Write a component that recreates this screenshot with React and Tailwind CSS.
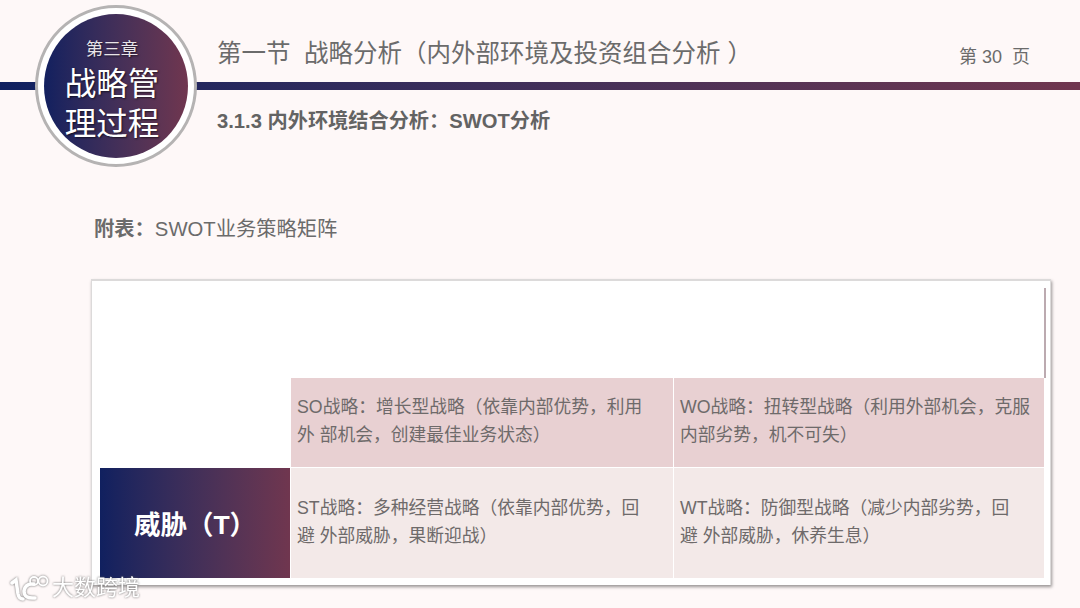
const font = "font-['Liberation_Sans','Noto_Sans_CJK_SC',sans-serif]"

function Badge() {
  return (
    <div className="absolute left-[35px] top-[5px] w-[162px] h-[162px] rounded-full bg-white border-[3px] border-[#b5b3b3] flex items-center justify-center">
      <div className="w-[144px] h-[144px] rounded-full bg-gradient-to-r from-[#12205f] to-[#70364f] flex flex-col items-center pr-[8px] text-white [text-shadow:1px_1px_2px_rgba(0,0,0,0.6)]">
        <div className="mt-[23px] text-[17.5px] leading-[24px] text-[#e8e4e8]">第三章</div>
        <div className="mt-[3px] text-[31.5px] leading-[40px]">战略管</div>
        <div className="text-[31.5px] leading-[40px]">理过程</div>
      </div>
    </div>
  )
}

function Watermark() {
  return (
    <div className="absolute left-[10px] top-[574px] flex items-center gap-[2px] text-white [filter:drop-shadow(0_0_1px_rgba(90,90,90,0.9))]">
      <svg width="40" height="28" viewBox="0 0 40 28" fill="none" stroke="currentColor" strokeLinecap="round">
        <path d="M2 9 L6 6 L8 20 Q9 25 13 25" strokeWidth="3.5" />
        <path d="M24 10 Q15 9 14 17 Q14 25 25 24" strokeWidth="3.5" />
        <circle cx="24" cy="7" r="4" strokeWidth="1.8" />
        <circle cx="33" cy="7" r="4.5" strokeWidth="1.8" />
      </svg>
      <span className="text-[22px] leading-[28px]">大数跨境</span>
    </div>
  )
}

export default function App() {
  return (
    <div className={`relative w-[1080px] h-[608px] overflow-hidden bg-[#fef8f8] ${font}`}>
      <div className="pl-[217px] pr-[50px] pt-[38px] h-[82px] flex items-start justify-between text-[#6b6b6b]">
        <div className="text-[24.5px] leading-[32px] whitespace-pre">第一节  战略分析（内外部环境及投资组合分析 ）</div>
        <div className="text-[18px] leading-[38px] whitespace-pre">第 30  页</div>
      </div>
      <div className="h-[8px] bg-gradient-to-r from-[#0f2060] to-[#70364f]" />
      <div className="pl-[217px] pt-[18px] text-[20.2px] leading-[26px] font-bold text-[#636363]">3.1.3 内外环境结合分析：SWOT分析</div>

      <div className="pl-[94px] pt-[81px] text-[20.3px] leading-[28px] text-[#6b6b6b]">
        <b>附表：</b>SWOT业务策略矩阵
      </div>

      <div className="relative mt-[36px] ml-[91px] w-[960px] h-[306px] bg-white border-t-2 border-l border-r border-[#dcdada] shadow-[1px_2px_3px_rgba(0,0,0,0.4)] pl-[8px] pt-[96px]">
        <div className="absolute left-[952px] top-[7px] w-[2px] h-[90px] bg-[#bcaab0]" />
        <div className="mt-[1px] grid grid-cols-[190px_382px_370px] grid-rows-[89px_110px] gap-[1px] text-[17.75px] leading-[28px] text-[#6e6a6a]">
          <div className="bg-white" />
          <div className="bg-[#e8d0d2] px-[6px] pt-[15px]">SO战略：增长型战略（依靠内部优势，利用<br />外 部机会，创建最佳业务状态）</div>
          <div className="bg-[#e8d0d2] px-[6px] pt-[15px]">WO战略：扭转型战略（利用外部机会，克服<br />内部劣势，机不可失）</div>
          <div className="bg-gradient-to-r from-[#10205f] to-[#70364f] flex items-center justify-center pt-[4px] text-white font-bold text-[26.5px]">威胁（T）</div>
          <div className="bg-[#f3e9e8] px-[6px] pt-[26px]">ST战略：多种经营战略（依靠内部优势，回<br />避 外部威胁，果断迎战）</div>
          <div className="bg-[#f3e9e8] px-[6px] pt-[26px]">WT战略：防御型战略（减少内部劣势，回<br />避 外部威胁，休养生息）</div>
        </div>
      </div>

      <Badge />
      <Watermark />
    </div>
  )
}
